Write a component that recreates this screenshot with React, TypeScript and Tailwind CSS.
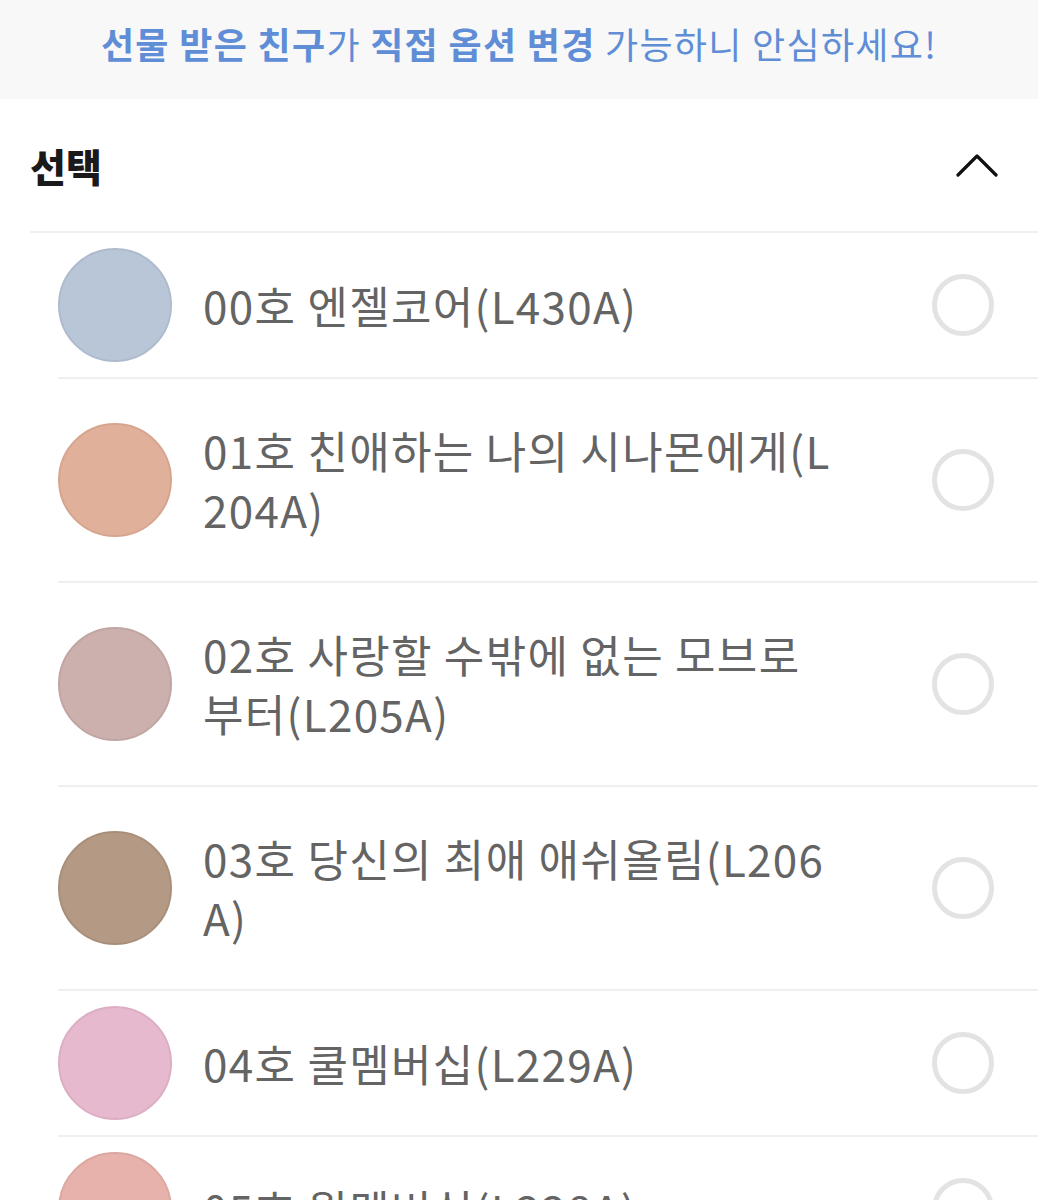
const SHADES = [
  { name: "00호 엔젤코어(L430A)", color: "#b9c6d8", ring: "#aebbcd" },
  { name: "01호 친애하는 나의 시나몬에게(L204A)", color: "#e1b09b", ring: "#d6a590" },
  { name: "02호 사랑할 수밖에 없는 모브로부터(L205A)", color: "#ccb0ad", ring: "#c1a5a2" },
  { name: "03호 당신의 최애 애쉬올림(L206A)", color: "#b49a84", ring: "#a98f79" },
  { name: "04호 쿨멤버십(L229A)", color: "#e7b9cf", ring: "#dcaec4" },
  { name: "05호 웜멤버십(L228A)", color: "#e7b2ac", ring: "#dca7a1" },
];

function ShadeRow({ name, color, ring }: { name: string; color: string; ring: string }) {
  return (
    <li className="flex items-center border-b-2 border-[#f0f0f0] py-[15px] pr-[44px]">
      <span
        className="h-[114px] w-[114px] shrink-0 rounded-full border-2"
        style={{ backgroundColor: color, borderColor: ring }}
      />
      <span className="ml-[31px] w-[633px] break-all py-[27px] text-[44px] leading-[59px] tracking-[1.3px] text-[#646464]">
        {name}
      </span>
      <span className="ml-auto h-[62px] w-[62px] shrink-0 rounded-full border-[5px] border-[#e3e3e3]" />
    </li>
  );
}

export default function App() {
  return (
    <div
      className="h-[1200px] w-[1038px] overflow-hidden bg-white"
      style={{ fontFamily: '"Noto Sans CJK KR", "Noto Sans", sans-serif' }}
    >
      {/* Notice banner */}
      <div className="flex h-[99px] items-center justify-center bg-[#f8f8f8] pb-[14px] text-[36px] tracking-[1.3px] text-[#5f8dd6]">
        <p>
          <b className="font-bold">선물 받은 친구</b>가 <b className="font-bold">직접 옵션 변경</b> 가능하니 안심하세요!
        </p>
      </div>

      <section className="pl-[30px]">
        {/* Header */}
        <div className="flex h-[132px] items-center justify-between pr-[40px]">
          <h2 className="text-[39px] font-black text-[#1a1a1a]">선택</h2>
          <svg width="42" height="24" viewBox="0 0 42 24" fill="none">
            <path d="M2 22 L21 3 L40 22" stroke="#111" strokeWidth="3.2" strokeLinecap="round" strokeLinejoin="round" />
          </svg>
        </div>

        <div className="border-t-2 border-[#f0f0f0] pl-[28px]">
          <ul>
            {SHADES.map((s) => (
              <ShadeRow key={s.name} {...s} />
            ))}
          </ul>
        </div>
      </section>
    </div>
  );
}
